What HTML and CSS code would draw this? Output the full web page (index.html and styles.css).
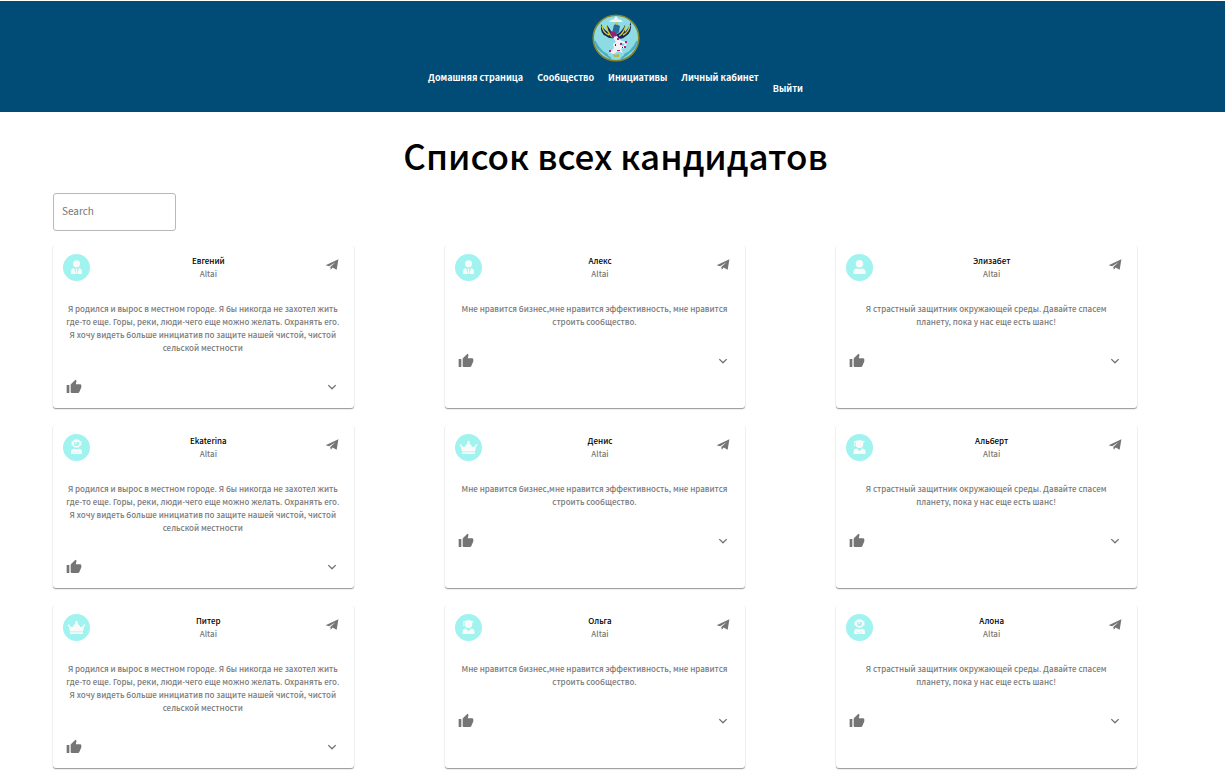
FILE: index.html
```html
<!DOCTYPE html>
<html lang="ru">
<head>
<meta charset="utf-8">
<meta name="viewport" content="width=device-width, initial-scale=1">
<title>Список всех кандидатов</title>
<link rel="stylesheet" href="styles.css">
</head>
<body>
<svg class="sprite" aria-hidden="true">
  <symbol id="send" viewBox="0 0 24 24"><path d="M1 14 23 4 20 22 13 18 10 22 9 17 18 9 7 16Z"/></symbol>
  <symbol id="like" viewBox="0 0 24 24"><path d="M1 21h4V9H1v12zm22-11c0-1.100-.9-2-2-2h-6.310l.95-4.570.03-.32c0-.41-.17-.79-.44-1.060L14.170 1 7.590 7.590C7.220 7.950 7 8.450 7 9v10c0 1.100.9 2 2 2h9c.83 0 1.540-.5 1.840-1.220l3.020-7.050c.09-.23.14-.47.14-.73v-2z"/></symbol>
  <symbol id="more" viewBox="0 0 24 24"><path d="M16.900 8.500 12 13.200 7.100 8.500 5.700 9.900l6.300 6.100 6.300-6.100z"/></symbol>
  <symbol id="suit" viewBox="0 0 27 27"><circle cx="13.500" cy="9.700" r="3.500"/><path d="M8 20v-2.500q0-3 3.200-3.300L12.500 20ZM19 20v-2.500q0-3-3.200-3.300L14.500 20ZM12.500 14.500h2l-.5 1.500.5 3-1 1-1-1 .5-3Z"/></symbol>
  <symbol id="person" viewBox="0 0 27 27"><circle cx="13.500" cy="9.800" r="3.700"/><path d="M7.500 20v-2q0-3.400 3.500-3.500 2.500 1 5 0 3.500.1 3.500 3.500v2Z"/></symbol>
  <symbol id="astronaut" viewBox="0 0 27 27"><path fill-rule="evenodd" d="M9.500 7.500a4.600 4.600 0 0 1 8 0h.9v4h-.9a4.600 4.600 0 0 1-8 0h-.9v-4ZM11 8v2.500q.4 1.600 2.500 1.600t2.500-1.600V8Z"/><path d="M12 8.800h.7v-.7h.6v.7h.7v.6h-.7v.7h-.6v-.7H12Z"/><path fill-rule="evenodd" d="M8 20v-2q0-3 3-3.200 2.500 1 5 0 3 .2 3 3.200v2Zm3.500-2v1h1v-1Zm3-.5v1h1v-1Z"/></symbol>
  <symbol id="crown" viewBox="0 0 27 27"><path d="M7 17.500 5.600 11.500 9.300 13.300 13 8.500h1l3.700 4.800 3.700-1.800-1.400 6ZM7 18.300h13V20H7Z"/><circle cx="13.500" cy="8" r="1.200"/><circle cx="5.700" cy="11.300" r="1"/><circle cx="21.300" cy="11.300" r="1"/></symbol>
  <symbol id="graduate" viewBox="0 0 27 27"><path d="m7.500 7.500 6-1.500 6 1.500-2.200.8v2a3.800 3.800 0 0 1-7.600 0v-2l-.8-.2v2.100l.6 1.800H7.700l.6-1.800V8ZM7.500 20v-2q0-3.200 3.300-3.500l2.700 2.700 2.700-2.700q3.300.3 3.300 3.500v2Z"/></symbol>
</svg>

<header class="site-header">
  <svg class="logo" viewBox="0 0 48 48" role="img" aria-label="Герб">
    <circle cx="24" cy="24" r="22.800" fill="#8fdbe3" stroke="#82862c" stroke-width="1.600"/>
    <path d="M2.500 27Q8 38 19 44.500M45.500 27Q40 38 29 44.500M4 31q4 7 12 10M44 31q-4 7-12 10" fill="none" stroke="#4baec5" stroke-width="1.800"/>
    <path d="m17 8 3-3 1 1 3-4 3 4 1-1 3 3Z" fill="#eef3f6"/>
    <path d="M9 10Q8 20 14 22q3 3 8 2-2-7-7-13l1 7Q12 16 9 10ZM39 8Q40 19 34 22q-4 4-8 2l-2-3q6-3 9-10v7q4-4 6-10Z" fill="#16245a"/>
    <path d="M10 12q1 7 7 9M14 12q2 7 6 11M38 11q-1 7-7 10M34 11q-2 8-7 11" fill="none" stroke="#d0cf35" stroke-width="1.400"/>
    <path d="m22 11 2-1 4 2-1 6-3 3-4-2Z" fill="#276c9e"/>
    <path d="m23 9 2-1 1 2-2 1Z" fill="#c4c63c"/>
    <path d="m18 17 5 1 2 3-2 3-4-2Z" fill="#952078"/>
    <path d="m21 23 4-1 3 4 2 5-1 4 2 4-5-2-4 3-4-1 4-5-1-4 3-2Z" fill="#f3f0f5"/>
    <path d="m28 34 4-1 2-3M28 27l5 2" fill="none" stroke="#fff" stroke-width="1.500"/>
    <path d="M20 23h2v1h-2ZM25 24h2v2h-2ZM28 29h2v2h-2ZM33 27h2v2h-2ZM32 32h2v2h-2ZM17 36h2v2h-2ZM25 36h3v1h-3Z" fill="#b32187"/>
    <path d="M23 30h1v2h-1ZM30 33h1v1h-1Z" fill="#35304e"/>
    <path d="m21 40 3 1 3-1v3h-5Z" fill="#b5b846"/>
  </svg>
  <nav class="nav">
    <a href="#">Домашняя страница</a>
    <a href="#">Сообщество</a>
    <a href="#">Инициативы</a>
    <a href="#">Личный кабинет</a>
    <a class="logout" href="#">Выйти</a>
  </nav>
</header>

<main class="page">
  <h1>Список всех кандидатов</h1>
  <input class="search" type="search" placeholder="Search" aria-label="Search">
  <div class="cards" id="cards"></div>
</main>
<script src="cards.js"></script>
</body>
</html>
```

FILE: styles.css
```css
* { box-sizing: border-box; }

body {
  margin: 0;
  background: #fff;
  color: #000;
  font-family: "Noto Sans CJK SC", "Noto Sans", sans-serif;
  font-size: 8px;
  font-weight: 500;
  line-height: 13px;
}

.sprite { display: none; }

.site-header {
  display: flex;
  flex-direction: column;
  align-items: center;
  gap: 9px;
  margin-top: 1px;
  padding: 13px 0 16px 6px;
  background: #014c76;
}

.logo { width: 48px; height: 48px; }

.nav { display: flex; gap: 14px; }

.nav a {
  color: #fff;
  font-size: 9px;
  font-weight: 700;
  line-height: 14px;
  text-decoration: none;
}

.nav .logout { margin-top: 11px; }

.page { padding: 18px 88px 9px 53px; }

h1 {
  margin: 0 0 14px;
  padding-left: 41px;
  font-size: 35px;
  font-weight: 500;
  line-height: 49px;
  text-align: center;
}

.search {
  display: block;
  width: 123px;
  height: 38px;
  margin-bottom: 14px;
  padding: 0 8px 4px;
  border: 1px solid #b9b9b9;
  border-radius: 3px;
  background: #fff;
  font: inherit;
  font-size: 10px;
  font-weight: 400;
}

.search::placeholder { color: #757575; opacity: 1; }

.cards {
  display: grid;
  grid-template-columns: repeat(3, 1fr);
  gap: 17px 91px;
}

.card {
  padding: 9px 11px 3px 10px;
  border-radius: 3px;
  box-shadow: 0 1px 1px rgba(0, 0, 0, .34), 0 1px 2px rgba(0, 0, 0, .12);
}

.card-head {
  display: flex;
  align-items: flex-start;
  height: 28px;
}

.avatar {
  width: 27px;
  height: 27px;
  border-radius: 50%;
  background: #a0f3ef;
  fill: #fafafa;
}

.who {
  flex: 1;
  padding-left: 3px;
  text-align: center;
}

.name {
  margin: 0;
  font-size: 8px;
  font-weight: 500;
}

.region, .about { margin: 0; color: #7a7a7a; }

.about { padding: 20px 2px; text-align: center; }

.actions {
  display: flex;
  justify-content: space-between;
  padding: 5px 3px 10px;
}

.icon-button {
  display: block;
  width: 16px;
  height: 16px;
  padding: 0;
  border: 0;
  background: none;
}

.card-head .icon-button { margin: 2px 3px 0 0; }

.icon-button svg { display: block; width: 16px; height: 16px; fill: #757575; }

.icon-button .send { width: 14px; height: 14px; margin: 1px; }
```

FILE: cards.js
```js
const texts = [
  "Я родился и вырос в местном городе. Я бы никогда не захотел жить где-то еще. Горы, реки, люди-чего еще можно желать. Охранять его. Я хочу видеть больше инициатив по защите нашей чистой, чистой сельской местности",
  "Мне нравится бизнес,мне нравится эффективность, мне нравится строить сообщество.",
  "Я страстный защитник окружающей среды. Давайте спасем планету, пока у нас еще есть шанс!"
];

const people = [
  ["Евгений", "suit"], ["Алекс", "suit"], ["Элизабет", "person"],
  ["Ekaterina", "astronaut"], ["Денис", "crown"], ["Альберт", "graduate"],
  ["Питер", "crown"], ["Ольга", "graduate"], ["Алона", "astronaut"]
];

document.getElementById("cards").innerHTML = people.map(([name, icon], i) => `
  <article class="card">
    <div class="card-head">
      <svg class="avatar" aria-hidden="true"><use href="#${icon}"/></svg>
      <div class="who">
        <h2 class="name">${name}</h2>
        <p class="region">Altai</p>
      </div>
      <button class="icon-button" aria-label="Написать"><svg class="send"><use href="#send"/></svg></button>
    </div>
    <p class="about">${texts[i % 3]}</p>
    <div class="actions">
      <button class="icon-button" aria-label="Нравится"><svg><use href="#like"/></svg></button>
      <button class="icon-button" aria-label="Подробнее"><svg><use href="#more"/></svg></button>
    </div>
  </article>`).join("");
```
